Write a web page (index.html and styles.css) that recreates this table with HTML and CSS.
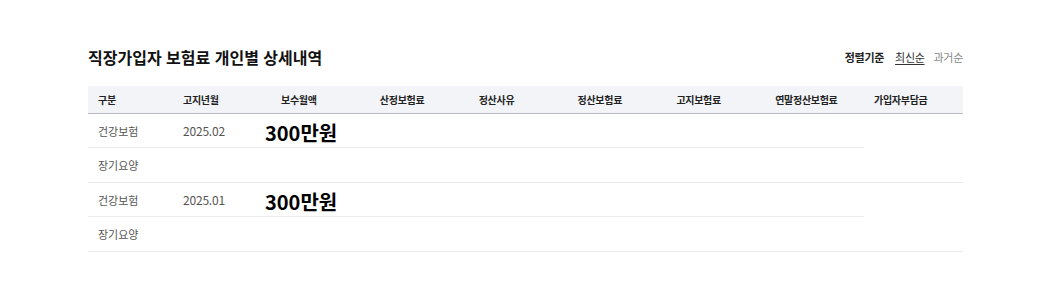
FILE: index.html
```html
<!DOCTYPE html>
<html lang="ko">
<head>
<meta charset="utf-8">
<title>직장가입자 보험료 개인별 상세내역</title>
<link rel="stylesheet" href="styles.css">
</head>
<body>
<div class="page">
  <div class="head">
    <h2 class="title">직장가입자 보험료 개인별 상세내역</h2>
    <div class="sort">
      <span class="sort-label">정렬기준</span>
      <a class="sort-opt active" href="#">최신순</a>
      <a class="sort-opt" href="#">과거순</a>
    </div>
  </div>
  <table class="detail">
    <colgroup>
      <col class="c-kind">
      <col class="c-date">
      <col><col><col><col><col><col><col>
    </colgroup>
    <thead>
      <tr>
        <th>구분</th>
        <th>고지년월</th>
        <th>보수월액</th>
        <th>산정보험료</th>
        <th>정산사유</th>
        <th>정산보험료</th>
        <th>고지보험료</th>
        <th>연말정산보험료</th>
        <th>가입자부담금</th>
      </tr>
    </thead>
    <tbody>
      <tr class="main">
        <td>건강보험</td>
        <td class="date">2025.02</td>
        <td class="amt-cell"><span class="amount">300만원</span></td>
        <td></td><td></td><td></td><td></td><td></td>
        <td rowspan="2"></td>
      </tr>
      <tr class="sub">
        <td>장기요양</td>
        <td></td><td></td><td></td><td></td><td></td><td></td><td></td>
      </tr>
      <tr class="main">
        <td>건강보험</td>
        <td class="date">2025.01</td>
        <td class="amt-cell"><span class="amount">300만원</span></td>
        <td></td><td></td><td></td><td></td><td></td>
        <td rowspan="2"></td>
      </tr>
      <tr class="sub">
        <td>장기요양</td>
        <td></td><td></td><td></td><td></td><td></td><td></td><td></td>
      </tr>
    </tbody>
  </table>
</div>
</body>
</html>
```

FILE: styles.css
```css
html, body {
  margin: 0;
  padding: 0;
  background: #ffffff;
}

body {
  font-family: "Noto Sans CJK KR", "Noto Sans", sans-serif;
  color: #333;
}

.page {
  width: 875px;
  margin-left: 88px;
  padding-top: 46px;
}

.head {
  display: flex;
  justify-content: space-between;
  align-items: center;
  height: 22px;
}

.title {
  margin: 0;
  font-size: 16px;
  line-height: 22px;
  font-weight: 700;
  color: #111;
}

.sort {
  display: flex;
  align-items: center;
  gap: 9px;
  font-size: 11px;
  letter-spacing: -0.3px;
  line-height: 16px;
}

.sort-label {
  font-weight: 700;
  color: #222;
  margin-right: 2px;
}

.sort-opt {
  color: #888;
  text-decoration: none;
}

.sort-opt.active {
  color: #333;
  text-decoration: underline;
  text-underline-offset: 2px;
}

.detail {
  margin-top: 18px;
  width: 875px;
  border-collapse: collapse;
  table-layout: fixed;
}

.c-kind { width: 85px; }
.c-date { width: 98px; }

.detail th {
  height: 27px;
  padding: 0 10px;
  background: #f3f4f8;
  border-bottom: 1px solid #b8bac8;
  text-align: left;
  font-size: 10px;
  font-weight: 700;
  color: #222;
  letter-spacing: -0.3px;
  white-space: nowrap;
}

.detail td {
  padding: 0 10px;
  border-bottom: 1px solid #ebebee;
  font-size: 11px;
  color: #555;
  white-space: nowrap;
  vertical-align: middle;
}

.detail tr.main td { height: 33px; }
.detail tr.sub td { height: 34px; }

.detail td.date {
  font-size: 12px;
  letter-spacing: -0.2px;
}

.detail tr.main td.amt-cell {
  height: 27px;
  padding-top: 6px;
}

.amount {
  margin-left: -16px;
  font-size: 20px;
  line-height: 20px;
  font-weight: 700;
  color: #000;
}
```
